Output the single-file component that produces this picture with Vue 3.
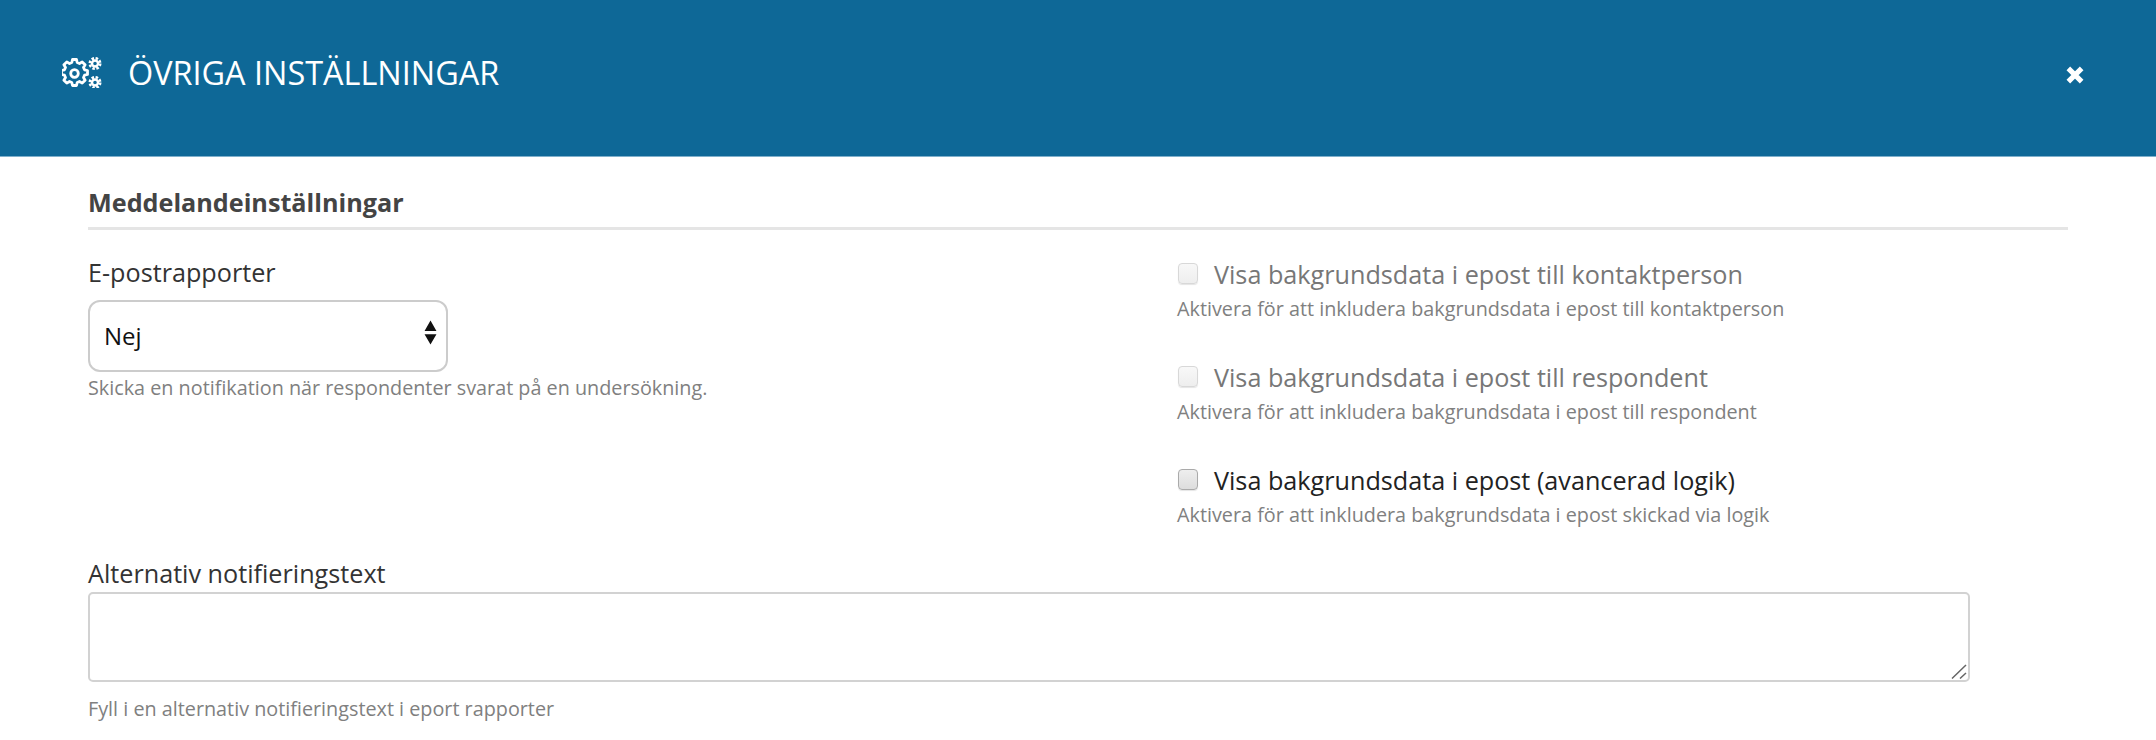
<template>
  <div class="modal">
    <header class="modal-header">
      <svg class="gears" viewBox="0 0 40 31" fill="none" stroke="#fff">
        <g stroke-width="2.8" stroke-linejoin="round">
          <path d="M10.500 2.500h4l.7 3 2.300 1 2.700-1.600 2.900 2.900-1.600 2.700 1 2.300 3 .7v4l-3 .7-1 2.300 1.600 2.700-2.900 2.900-2.700-1.600-2.300 1-.7 3h-4l-.7-3-2.300-1-2.700 1.600-2.900-2.900 1.600-2.700-1-2.300-3-.7v-4l3-.7 1-2.300-1.600-2.700 2.900-2.900 2.700 1.600 2.300-1z" />
          <circle cx="12.500" cy="16.500" r="3.800" />
        </g>
        <g>
          <circle cx="33" cy="6.500" r="3" stroke-width="2.400" />
          <circle cx="33" cy="6.500" r="5.200" stroke-width="2.600" stroke-dasharray="2.500 1.580" />
          <circle cx="33" cy="25.500" r="3" stroke-width="2.400" />
          <circle cx="33" cy="25.500" r="5.200" stroke-width="2.600" stroke-dasharray="2.500 1.580" />
        </g>
      </svg>
      <h1 class="modal-title">ÖVRIGA INSTÄLLNINGAR</h1>
      <button class="close-btn" aria-label="Stäng">
        <svg viewBox="0 0 18 18"><path d="M3 3l12 12M15 3L3 15" stroke="#fff" stroke-width="4.600" /></svg>
      </button>
    </header>

    <div class="modal-body">
      <h2 class="section-title">Meddelandeinställningar</h2>

      <div class="columns">
        <div class="col-left">
          <label class="field-label">E-postrapporter</label>
          <div class="select-wrap">
            <select class="select">
              <option>Nej</option>
              <option>Ja</option>
            </select>
            <svg class="select-arrows" viewBox="0 0 12 22" fill="#111">
              <path d="M6 0l5.500 9.500H.500zM6 22L.500 12.500h11z" />
            </svg>
          </div>
          <p class="help select-help">Skicka en notifikation när respondenter svarat på en undersökning.</p>
        </div>

        <div class="col-right">
          <div v-for="opt in options" :key="opt.label" class="check-item">
            <label class="check-label" :class="{ disabled: opt.disabled }">
              <input type="checkbox" class="check" :disabled="opt.disabled" />
              {{ opt.label }}
            </label>
            <p class="help check-help">{{ opt.help }}</p>
          </div>
        </div>
      </div>

      <label class="field-label text-label">Alternativ notifieringstext</label>
      <div class="textarea-wrap">
        <textarea class="textarea"></textarea>
        <svg class="grip" viewBox="0 0 16 15" stroke="#666" stroke-width="1.500" fill="none">
          <path d="M1 14.500L15 1M9 14.500L15 9" />
        </svg>
      </div>
      <p class="help area-help">Fyll i en alternativ notifieringstext i eport rapporter</p>
    </div>
  </div>
</template>

<script setup>
const options = [
  {
    label: 'Visa bakgrundsdata i epost till kontaktperson',
    help: 'Aktivera för att inkludera bakgrundsdata i epost till kontaktperson',
    disabled: true,
  },
  {
    label: 'Visa bakgrundsdata i epost till respondent',
    help: 'Aktivera för att inkludera bakgrundsdata i epost till respondent',
    disabled: true,
  },
  {
    label: 'Visa bakgrundsdata i epost (avancerad logik)',
    help: 'Aktivera för att inkludera bakgrundsdata i epost skickad via logik',
    disabled: false,
  },
];
</script>

<style>
html,
body {
  margin: 0;
  background: #fff;
}
</style>

<style scoped>
.modal {
  width: 2156px;
  height: 740px;
  overflow: hidden;
  font-family: 'Open Sans', sans-serif;
  background: #fff;
}

.modal-header {
  height: 157px;
  box-sizing: border-box;
  background: #0e6897;
  border-bottom: 1px solid #7fb0cc;
  display: flex;
  align-items: center;
  padding: 0 62px 7px;
}

.gears {
  width: 40px;
  height: 31px;
  margin: 0 26px 4px 0;
}

.modal-title {
  margin: 0 0 5px;
  font-size: 32.4px;
  font-weight: 400;
  color: #fff;
}

.close-btn {
  margin-left: auto;
  margin-right: 9px;
  width: 20px;
  height: 20px;
  padding: 0;
  border: 0;
  background: none;
  display: flex;
}

.close-btn svg {
  width: 20px;
  height: 20px;
}

.modal-body {
  padding: 29px 88px 0;
}

.section-title {
  margin: 0;
  padding-bottom: 8px;
  border-bottom: 3px solid #e5e5e5;
  font-size: 25.2px;
  line-height: 33px;
  font-weight: 700;
  color: #444;
}

.columns {
  display: flex;
  height: 327px;
}

.col-left {
  width: 1089px;
  padding-top: 26px;
}

.col-right {
  flex: 1;
  padding-top: 27px;
}

.field-label {
  display: block;
  font-size: 25.2px;
  line-height: 33px;
  color: #333;
}

.select-wrap {
  position: relative;
  width: 360px;
  margin-top: 11px;
}

.select {
  display: block;
  width: 100%;
  height: 72px;
  box-sizing: border-box;
  padding: 0 14px 2px;
  border: 2px solid #ccc;
  border-radius: 12px;
  background: #fff;
  appearance: none;
  font-family: inherit;
  font-size: 24px;
  color: #111;
}

.select-arrows {
  position: absolute;
  top: 20px;
  right: 11px;
  width: 13px;
  height: 25px;
}

.help {
  margin: 0;
  font-size: 19.8px;
  line-height: 28px;
  color: #808080;
}

.select-help {
  margin-top: 2px;
}

.check-item {
  height: 103px;
}

.check-label {
  display: flex;
  align-items: center;
  height: 33px;
  font-size: 25.2px;
  color: #222;
}

.check-label.disabled {
  color: #777;
}

.check {
  appearance: none;
  width: 20px;
  height: 21px;
  margin: 0 16px 0 1px;
  border: 1px solid #aaa;
  border-radius: 4px;
  background: linear-gradient(#eee, #ddd);
  box-shadow: 0 1px 1px #e5e5e5;
}

.check:disabled {
  border-color: #d8d8d8;
  background: linear-gradient(#f8f8f8, #eee);
}

.check-help {
  margin-top: 5px;
}

.textarea-wrap {
  position: relative;
  width: 1882px;
  margin-top: 2px;
}

.textarea {
  display: block;
  width: 100%;
  height: 90px;
  box-sizing: border-box;
  border: 2px solid #d2d2d2;
  border-radius: 5px;
  background: #fff;
  resize: none;
}

.grip {
  position: absolute;
  right: 3px;
  bottom: 3px;
  width: 16px;
  height: 15px;
}

.area-help {
  margin-top: 13px;
}
</style>
